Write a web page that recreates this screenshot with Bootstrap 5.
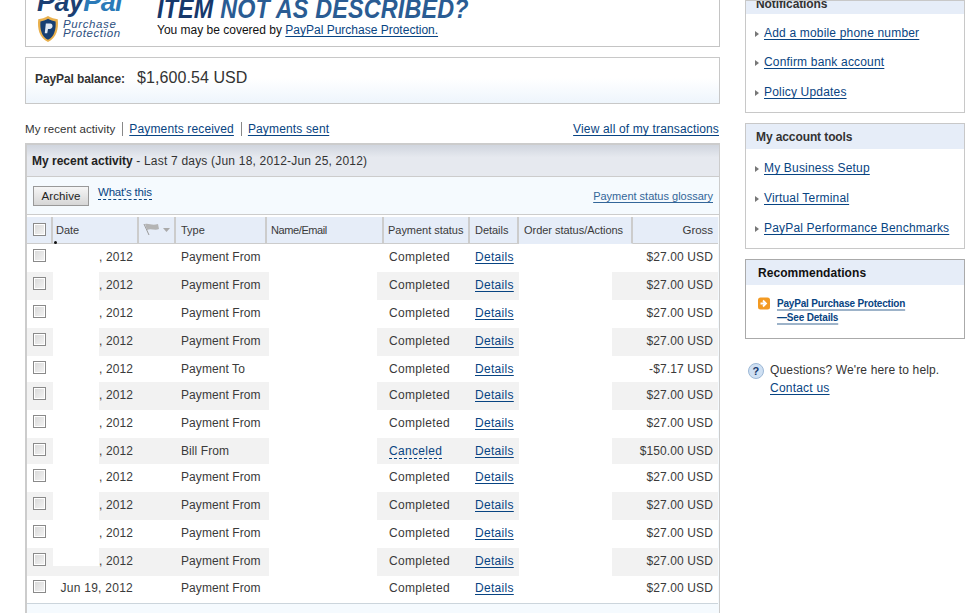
<!doctype html>
<html lang="en"><head><meta charset="utf-8"><title>PayPal activity</title>
<link rel="stylesheet" href="https://cdn.jsdelivr.net/npm/bootstrap@5.3.0/dist/css/bootstrap.min.css">
<style>
html,body{height:613px;overflow:hidden}
body{font:12px/14px "Liberation Sans",Arial,sans-serif;color:#333;letter-spacing:.15px;background:#fff}
a{color:#084482;text-underline-offset:2px}
.pp-page{padding-left:25px;width:965px;gap:25px}
.pp-main{width:695px;flex:none}
.pp-side{width:220px;flex:none}
.pp-banner{height:47px;border:solid #c4c4c4;border-width:0 1px 1px;overflow:hidden;letter-spacing:0}
.pp-logo{width:118px;margin-left:11px;flex:none}
.pp-logoword{font:italic 700 27px/27px "Liberation Sans",sans-serif;margin-top:-11px;height:14px;color:#1b3f73;letter-spacing:-.6px}
.pp-logoword b{color:#2b7ab8}
.pp-logosub{font:italic 11.500px/9px "Liberation Sans",sans-serif;color:#2d4f80;margin-top:13px;letter-spacing:.6px;gap:4px}
.pp-head{margin-left:2px}
.pp-title{font:italic 700 27px/27px "Liberation Sans",sans-serif;color:#16386b;margin-top:-4px;height:24px;white-space:nowrap;transform:scaleX(.865);transform-origin:0 0;width:372px;letter-spacing:.2px}
.pp-title b{color:#2a5c93}
.pp-sub{color:#111;font-size:12px;line-height:14px;margin-top:3px}
.pp-balance{height:47px;margin-top:10px;border:1px solid #c8c8c8;background:linear-gradient(#fff 45%,#eef5fc);padding:0 9px;letter-spacing:0}
.pp-balance strong{width:102px;color:#333;font-size:12px;letter-spacing:-.1px;margin-top:-4px}
.pp-balance span{font-size:16px;color:#333;letter-spacing:.08px;margin-top:-6px}
.pp-tabs{margin-top:18px;height:14px;letter-spacing:.15px;padding-right:1px}
.pp-tabs .pp-sep{border-left:1px solid #888;height:14px;margin:0 6px 0 7px}
.pp-tabs .pp-here{font-size:11.500px;letter-spacing:.08px}
.pp-frame{margin-top:7px;border:solid #ccc;border-width:2px 1px 0 2px;background:#f5fafe;height:480px}
.pp-titlebar{height:32px;background:linear-gradient(#d0d5de,#e6e9ef 40%);border-bottom:1px solid #ccc;padding:0 5px}
.pp-titlebar strong{letter-spacing:0;color:#222}
.pp-titlebar div{letter-spacing:.2px}
.pp-tools{height:38px;padding:0 6px;border-bottom:1px solid #ccc}
.pp-arch{height:20px;width:56px;padding:0;margin-top:1px;border:1px solid #999;border-radius:0;font-size:11.500px;line-height:18px;color:#222;background:linear-gradient(#f6f6f6,#d6d6d6);letter-spacing:.1px}
.pp-what{margin:-5px 0 0 9px;font-size:11.500px;letter-spacing:-.2px;text-decoration:none;border-bottom:1px dashed #084482;line-height:13px}
.pp-gloss{font-size:11px;letter-spacing:0;color:#336699;text-decoration-color:#336699;margin-top:1px}
.pp-gapline{height:2px;background:#fff}
.pp-table{table-layout:fixed;width:691px;margin:0;border-collapse:separate;border-spacing:0;--bs-table-bg:transparent;background:#fff}
.table.pp-table>:not(caption)>*>*{padding:0;border:0;vertical-align:middle;white-space:nowrap;color:#3a3a3a;box-shadow:none}
.table.pp-thead>:not(caption)>*>th{height:27px;background:#e6edf8;font-weight:400;font-size:11px;letter-spacing:-.03px;border-bottom:1px solid #ccc;border-right:2px solid #ccc;padding:0 5px 1px 4px;position:relative}
.table.pp-thead>:not(caption)>*>th:last-child{border-right:0;text-align:right;font-size:11.500px}
.table.pp-thead>:not(caption)>*>th.pp-nol{border-bottom-color:#e6edf8;padding-left:5px}
.table.pp-thead>:not(caption)>*>th.pp-date{padding-left:3px}
.table.pp-thead>:not(caption)>*>th.pp-name{letter-spacing:-.4px;padding-left:4px}
.table.pp-thead>:not(caption)>*>th.pp-type{padding-left:5px}
.table.pp-thead>:not(caption)>*>th.pp-det{padding-left:5px}
.pp-thead .pp-dot{position:absolute;left:1px;bottom:-1px;width:3px;height:3px;background:#111;border-radius:50%}
.pp-rows tr{height:28px}
.pp-rows tr.pp-short{height:26px}
.table.pp-rows>tbody>tr.pp-alt>td{background:#f2f2f2}
.table.pp-rows>tbody>tr.pp-alt>td.pp-w{background:#fff}
.table.pp-rows>tbody>tr.pp-alt>td.pp-wp{background:linear-gradient(#fff 18px,#f2f2f2 18px)}
.table.pp-rows>tbody>tr>td{padding-bottom:3px}
.table.pp-rows>tbody>tr.pp-short>td{padding-bottom:1px}
.table.pp-rows>tbody>tr>td.pp-num{text-align:right;padding-right:6px;letter-spacing:.1px}
.table.pp-rows>tbody>tr>td.pp-full{letter-spacing:.25px}
.table.pp-rows>tbody>tr>td:nth-last-child(1){text-align:right;padding-right:5px;letter-spacing:.12px}
.table.pp-rows>tbody>tr>td:nth-last-child(3){padding-left:6px;letter-spacing:.3px}
.table.pp-rows>tbody>tr>td:nth-last-child(4){padding-left:12px;letter-spacing:.33px}
.table.pp-rows>tbody>tr>td:nth-last-child(6){padding-left:6px;letter-spacing:.08px}
.table.pp-rows>tbody>tr:last-child>td{border-bottom:1px solid #ccd5dc}
.pp-dashed{text-decoration:none;border-bottom:1px dashed #084482}
.pp-chk{appearance:none;-webkit-appearance:none;display:block;width:13px;height:13px;margin:-3px 0 0 6px;border:1px solid #8a8a8a;background:linear-gradient(135deg,#d8d8d8,#f4f4f4);box-shadow:inset 0 0 0 1px #fff}
.pp-short .pp-chk{margin-top:-3px}
.pp-thead .pp-chk{margin:0 0 0 2px}
.pp-box{border:1px solid #c8c8c8;margin-bottom:10px}
.pp-boxhead{background:#e6edf8;height:25px;padding:0 10px;font-weight:700;font-size:12px;color:#333;letter-spacing:-.1px}
.pp-clip{height:13px;overflow:hidden;align-items:flex-end!important}
.pp-clip span{display:block;margin-bottom:3px}
.pp-items{padding:4px 0 5px 18px;margin:0;list-style:none;letter-spacing:.18px}
.pp-clip+.pp-items li:nth-child(2){margin-top:-1px}
.pp-items li{height:30px;position:relative;line-height:30px}
.pp-items li::before{content:"";position:absolute;left:-9px;top:13px;width:0;height:0;border:solid transparent;border-width:3px 0 3px 4px;border-left-color:#777}
.pp-rec{border-color:#aaa;height:80px}
.pp-rechead{padding-left:12px;color:#111;letter-spacing:.05px;font-size:12px}
.pp-recbody{padding:12px 0 0 12px;gap:7px}
.pp-recbody a{font-size:10px;font-weight:700;letter-spacing:-.18px;line-height:14px;text-decoration-color:#9db3c9;text-decoration-thickness:2px}
.pp-ask{padding:14px 0 0 3px;gap:6px;font-size:12px}
.pp-ask a{letter-spacing:.22px}
</style></head><body>
<div class="d-flex pp-page">
<main class="pp-main">
  <div class="pp-banner d-flex">
    <div class="pp-logo">
      <div class="pp-logoword">Pay<b>Pal</b></div>
      <div class="pp-logosub d-flex align-items-center">
        <svg width="22" height="26" viewBox="1 1 20 24" class="flex-shrink-0"><path d="M11 1C8 3 5 3.500 2 4c-1 9 1 17 9 21 8-4 10-12 9-21-3-.5-6-1-9-3z" fill="#e9b04c"/><path d="M11 3.500C8.500 5 6.500 5.500 4 6c-.5 7 1 14 7 17 6-3 7.500-10 7-17-2.500-.5-4.500-1-7-2.500z" fill="#173f72"/><path d="M9 8h4c3 0 3 5-.5 5H11l-.7 4H8z" fill="#dfe8f3"/></svg>
        <div>Purchase<br>Protection</div>
      </div>
    </div>
    <div class="pp-head">
      <div class="pp-title">ITEM <b>NOT AS DESCRIBED?</b></div>
      <div class="pp-sub">You may be covered by <a href="#">PayPal Purchase Protection.</a></div>
    </div>
  </div>
  <div class="pp-balance d-flex align-items-center"><strong>PayPal balance:</strong><span>$1,600.54 USD</span></div>
  <div class="pp-tabs d-flex">
    <span class="pp-here">My recent activity</span><i class="pp-sep"></i><a href="#">Payments received</a><i class="pp-sep"></i><a href="#">Payments sent</a>
    <a href="#" class="ms-auto">View all of my transactions</a>
  </div>
  <section class="pp-frame">
    <div class="pp-titlebar d-flex align-items-center"><div><strong>My recent activity</strong> - Last 7 days (Jun 18, 2012-Jun 25, 2012)</div></div>
    <div class="pp-tools d-flex align-items-center">
      <button class="pp-arch" type="button">Archive</button>
      <a href="#" class="pp-what">What's this</a>
      <a href="#" class="pp-gloss ms-auto">Payment status glossary</a>
    </div>
    <div class="pp-gapline"></div>
    <table class="table pp-table pp-thead">
      <colgroup><col style="width:26px"><col style="width:86px"><col style="width:37px"><col style="width:91px"><col style="width:117px"><col style="width:86px"><col style="width:49px"><col style="width:114px"><col style="width:85px"></colgroup>
      <thead><tr>
        <th><input type="checkbox" class="pp-chk" aria-label="Select all"></th>
        <th class="pp-date">Date<i class="pp-dot"></i></th>
        <th><svg width="28" height="14" viewBox="0 0 28 14" class="d-block"><path d="M1 1l5 11" stroke="#9a9a9a" fill="none"/><path d="M2 1c4-1 7 2 13 0l1 5c-4 2-8-1-12 1z" fill="#b4b4b4"/><path d="M20 5h7l-3.500 4z" fill="#aaa"/></svg></th>
        <th class="pp-type">Type</th><th class="pp-name">Name/Email</th><th>Payment status</th><th class="pp-det">Details</th><th class="pp-nol">Order status/Actions</th><th>Gross</th>
      </tr></thead>
    </table>
    <table class="table pp-table pp-rows">
      <colgroup><col style="width:26px"><col style="width:46px"><col style="width:40px"><col style="width:36px"><col style="width:94px"><col style="width:108px"><col style="width:92px"><col style="width:50px"><col style="width:93px"><col style="width:106px"></colgroup>
      <tbody>
      <tr><td><input type="checkbox" class="pp-chk" aria-label="Select"></td><td class="pp-w"></td><td class="pp-num">, 2012</td><td></td><td>Payment From</td><td class="pp-w"></td><td>Completed</td><td><a href="#">Details</a></td><td class="pp-w"></td><td>$27.00 USD</td></tr>
      <tr class="pp-alt"><td><input type="checkbox" class="pp-chk" aria-label="Select"></td><td class="pp-w"></td><td class="pp-num">, 2012</td><td></td><td>Payment From</td><td class="pp-w"></td><td>Completed</td><td><a href="#">Details</a></td><td class="pp-w"></td><td>$27.00 USD</td></tr>
      <tr><td><input type="checkbox" class="pp-chk" aria-label="Select"></td><td class="pp-w"></td><td class="pp-num">, 2012</td><td></td><td>Payment From</td><td class="pp-w"></td><td>Completed</td><td><a href="#">Details</a></td><td class="pp-w"></td><td>$27.00 USD</td></tr>
      <tr class="pp-alt"><td><input type="checkbox" class="pp-chk" aria-label="Select"></td><td class="pp-w"></td><td class="pp-num">, 2012</td><td></td><td>Payment From</td><td class="pp-w"></td><td>Completed</td><td><a href="#">Details</a></td><td class="pp-w"></td><td>$27.00 USD</td></tr>
      <tr class="pp-short"><td><input type="checkbox" class="pp-chk" aria-label="Select"></td><td class="pp-w"></td><td class="pp-num">, 2012</td><td></td><td>Payment To</td><td class="pp-w"></td><td>Completed</td><td><a href="#">Details</a></td><td class="pp-w"></td><td>-$7.17 USD</td></tr>
      <tr class="pp-alt"><td><input type="checkbox" class="pp-chk" aria-label="Select"></td><td class="pp-w"></td><td class="pp-num">, 2012</td><td></td><td>Payment From</td><td class="pp-w"></td><td>Completed</td><td><a href="#">Details</a></td><td class="pp-w"></td><td>$27.00 USD</td></tr>
      <tr><td><input type="checkbox" class="pp-chk" aria-label="Select"></td><td class="pp-w"></td><td class="pp-num">, 2012</td><td></td><td>Payment From</td><td class="pp-w"></td><td>Completed</td><td><a href="#">Details</a></td><td class="pp-w"></td><td>$27.00 USD</td></tr>
      <tr class="pp-alt pp-short"><td><input type="checkbox" class="pp-chk" aria-label="Select"></td><td class="pp-w"></td><td class="pp-num">, 2012</td><td></td><td>Bill From</td><td class="pp-w"></td><td><a href="#" class="pp-dashed">Canceled</a></td><td><a href="#">Details</a></td><td class="pp-w"></td><td>$150.00 USD</td></tr>
      <tr><td><input type="checkbox" class="pp-chk" aria-label="Select"></td><td class="pp-w"></td><td class="pp-num">, 2012</td><td></td><td>Payment From</td><td class="pp-w"></td><td>Completed</td><td><a href="#">Details</a></td><td class="pp-w"></td><td>$27.00 USD</td></tr>
      <tr class="pp-alt"><td><input type="checkbox" class="pp-chk" aria-label="Select"></td><td class="pp-w"></td><td class="pp-num">, 2012</td><td></td><td>Payment From</td><td class="pp-w"></td><td>Completed</td><td><a href="#">Details</a></td><td class="pp-w"></td><td>$27.00 USD</td></tr>
      <tr><td><input type="checkbox" class="pp-chk" aria-label="Select"></td><td class="pp-w"></td><td class="pp-num">, 2012</td><td></td><td>Payment From</td><td class="pp-w"></td><td>Completed</td><td><a href="#">Details</a></td><td class="pp-w"></td><td>$27.00 USD</td></tr>
      <tr class="pp-alt"><td><input type="checkbox" class="pp-chk" aria-label="Select"></td><td class="pp-wp"></td><td class="pp-num">, 2012</td><td></td><td>Payment From</td><td class="pp-w"></td><td>Completed</td><td><a href="#">Details</a></td><td class="pp-w"></td><td>$27.00 USD</td></tr>
      <tr><td><input type="checkbox" class="pp-chk" aria-label="Select"></td><td colspan="2" class="pp-num pp-full">Jun 19, 2012</td><td></td><td>Payment From</td><td class="pp-w"></td><td>Completed</td><td><a href="#">Details</a></td><td class="pp-w"></td><td>$27.00 USD</td></tr>
      </tbody>
    </table>
  </section>
</main>
<aside class="pp-side">
  <div class="pp-box">
    <div class="pp-boxhead pp-clip d-flex"><span>Notifications</span></div>
    <ul class="pp-items"><li><a href="#">Add a mobile phone number</a></li><li><a href="#">Confirm bank account</a></li><li><a href="#">Policy Updates</a></li></ul>
  </div>
  <div class="pp-box">
    <div class="pp-boxhead d-flex align-items-center">My account tools</div>
    <ul class="pp-items"><li><a href="#">My Business Setup</a></li><li><a href="#">Virtual Terminal</a></li><li><a href="#">PayPal Performance Benchmarks</a></li></ul>
  </div>
  <div class="pp-box pp-rec">
    <div class="pp-boxhead pp-rechead d-flex align-items-center">Recommendations</div>
    <div class="pp-recbody d-flex">
      <svg width="12" height="13" viewBox="0 0 12 13" class="flex-shrink-0"><rect y=".5" width="12" height="12" rx="2.500" fill="#f39a22"/><path d="M2.500 6.500h4M5 3.500l3 3-3 3" stroke="#fff" stroke-width="1.800" fill="none"/></svg>
      <a href="#">PayPal Purchase Protection<br>—See Details</a>
    </div>
  </div>
  <div class="pp-ask d-flex">
    <svg width="16" height="16" viewBox="0 0 16 16" class="flex-shrink-0"><circle cx="8" cy="8" r="7.500" fill="#cfe0f3" stroke="#9db8d6"/><text x="8" y="12" text-anchor="middle" font-family="Liberation Sans" font-weight="700" font-size="11" fill="#16386b">?</text></svg>
    <div>Questions? We're here to help.<br><a href="#" class="d-inline-block mt-1">Contact us</a></div>
  </div>
</aside>
</div>
<script src="https://cdn.jsdelivr.net/npm/bootstrap@5.3.0/dist/js/bootstrap.bundle.min.js"></script>
</body></html>
